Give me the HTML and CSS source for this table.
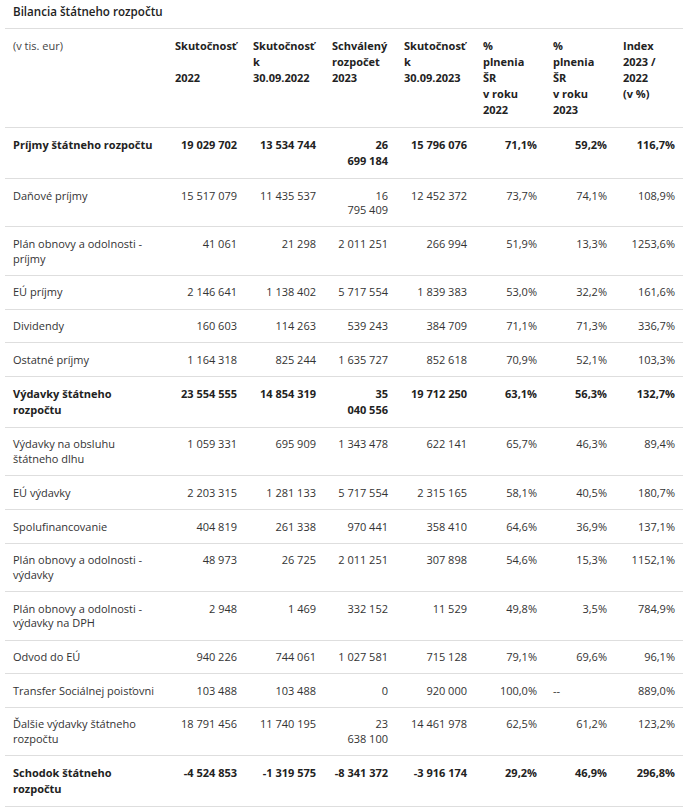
FILE: index.html
```html
<!DOCTYPE html>
<html lang="sk">
<head>
<meta charset="utf-8">
<title>Bilancia štátneho rozpočtu</title>
<link rel="stylesheet" href="styles.css">
</head>
<body>
<div class="wrap">
  <div class="title">Bilancia štátneho rozpočtu</div>
  <table class="budget">
    <colgroup>
      <col class="c0"><col class="c1"><col class="c2"><col class="c3"><col class="c4"><col class="c5"><col class="c6"><col class="c7">
    </colgroup>
    <thead>
      <tr>
        <th class="unit">(v tis. eur)</th>
        <th>Skutočnosť<br><br>2022</th>
        <th>Skutočnosť<br>k<br>30.09.2022</th>
        <th>Schválený<br>rozpočet<br>2023</th>
        <th>Skutočnosť<br>k<br>30.09.2023</th>
        <th>%<br>plnenia<br>ŠR<br>v roku<br>2022</th>
        <th>%<br>plnenia<br>ŠR<br>v roku<br>2023</th>
        <th>Index<br>2023 /<br>2022<br>(v %)</th>
      </tr>
    </thead>
    <tbody>
      <tr class="total"><td>Príjmy štátneho rozpočtu</td><td>19&nbsp;029&nbsp;702</td><td>13&nbsp;534&nbsp;744</td><td class="c3">26 699&nbsp;184</td><td>15&nbsp;796&nbsp;076</td><td>71,1%</td><td>59,2%</td><td>116,7%</td></tr>
      <tr><td>Daňové príjmy</td><td>15&nbsp;517&nbsp;079</td><td>11&nbsp;435&nbsp;537</td><td class="c3">16 795&nbsp;409</td><td>12&nbsp;452&nbsp;372</td><td>73,7%</td><td>74,1%</td><td>108,9%</td></tr>
      <tr><td>Plán obnovy a odolnosti - príjmy</td><td>41&nbsp;061</td><td>21&nbsp;298</td><td class="c3">2&nbsp;011&nbsp;251</td><td>266&nbsp;994</td><td>51,9%</td><td>13,3%</td><td>1253,6%</td></tr>
      <tr><td>EÚ príjmy</td><td>2&nbsp;146&nbsp;641</td><td>1&nbsp;138&nbsp;402</td><td class="c3">5&nbsp;717&nbsp;554</td><td>1&nbsp;839&nbsp;383</td><td>53,0%</td><td>32,2%</td><td>161,6%</td></tr>
      <tr><td>Dividendy</td><td>160&nbsp;603</td><td>114&nbsp;263</td><td class="c3">539&nbsp;243</td><td>384&nbsp;709</td><td>71,1%</td><td>71,3%</td><td>336,7%</td></tr>
      <tr><td>Ostatné príjmy</td><td>1&nbsp;164&nbsp;318</td><td>825&nbsp;244</td><td class="c3">1&nbsp;635&nbsp;727</td><td>852&nbsp;618</td><td>70,9%</td><td>52,1%</td><td>103,3%</td></tr>
      <tr class="total"><td>Výdavky štátneho rozpočtu</td><td>23&nbsp;554&nbsp;555</td><td>14&nbsp;854&nbsp;319</td><td class="c3">35 040&nbsp;556</td><td>19&nbsp;712&nbsp;250</td><td>63,1%</td><td>56,3%</td><td>132,7%</td></tr>
      <tr><td>Výdavky na obsluhu štátneho dlhu</td><td>1&nbsp;059&nbsp;331</td><td>695&nbsp;909</td><td class="c3">1&nbsp;343&nbsp;478</td><td>622&nbsp;141</td><td>65,7%</td><td>46,3%</td><td>89,4%</td></tr>
      <tr><td>EÚ výdavky</td><td>2&nbsp;203&nbsp;315</td><td>1&nbsp;281&nbsp;133</td><td class="c3">5&nbsp;717&nbsp;554</td><td>2&nbsp;315&nbsp;165</td><td>58,1%</td><td>40,5%</td><td>180,7%</td></tr>
      <tr><td>Spolufinancovanie</td><td>404&nbsp;819</td><td>261&nbsp;338</td><td class="c3">970&nbsp;441</td><td>358&nbsp;410</td><td>64,6%</td><td>36,9%</td><td>137,1%</td></tr>
      <tr><td>Plán obnovy a odolnosti - výdavky</td><td>48&nbsp;973</td><td>26&nbsp;725</td><td class="c3">2&nbsp;011&nbsp;251</td><td>307&nbsp;898</td><td>54,6%</td><td>15,3%</td><td>1152,1%</td></tr>
      <tr><td>Plán obnovy a odolnosti - výdavky na DPH</td><td>2&nbsp;948</td><td>1&nbsp;469</td><td class="c3">332&nbsp;152</td><td>11&nbsp;529</td><td>49,8%</td><td>3,5%</td><td>784,9%</td></tr>
      <tr><td>Odvod do EÚ</td><td>940&nbsp;226</td><td>744&nbsp;061</td><td class="c3">1&nbsp;027&nbsp;581</td><td>715&nbsp;128</td><td>79,1%</td><td>69,6%</td><td>96,1%</td></tr>
      <tr><td>Transfer Sociálnej poisťovni</td><td>103&nbsp;488</td><td>103&nbsp;488</td><td class="c3">0</td><td>920&nbsp;000</td><td>100,0%</td><td class="left">--</td><td>889,0%</td></tr>
      <tr><td>Ďalšie výdavky štátneho rozpočtu</td><td>18&nbsp;791&nbsp;456</td><td>11&nbsp;740&nbsp;195</td><td class="c3">23 638&nbsp;100</td><td>14&nbsp;461&nbsp;978</td><td>62,5%</td><td>61,2%</td><td>123,2%</td></tr>
      <tr class="total"><td>Schodok štátneho rozpočtu</td><td>-4&nbsp;524&nbsp;853</td><td>-1&nbsp;319&nbsp;575</td><td class="c3">-8&nbsp;341&nbsp;372</td><td>-3&nbsp;916&nbsp;174</td><td>29,2%</td><td>46,9%</td><td>296,8%</td></tr>
    </tbody>
  </table>
</div>
</body>
</html>
```

FILE: styles.css
```css
body {
  margin: 0;
  background: #fff;
  color: #333;
  font-family: "Open Sans", "Noto Sans", sans-serif;
}

.wrap {
  width: 678px;
  padding: 4px 0 0 5px;
}

.title {
  font-size: 11.6px;
  font-weight: 600;
  line-height: 16px;
  color: #222;
  padding: 0 8px 8px;
  border-bottom: 1px solid #dedede;
}

.budget {
  width: 678px;
  table-layout: fixed;
  border-collapse: collapse;
  font-size: 11px;
}

.c0 { width: 162px; }
.c1 { width: 78px; }
.c2 { width: 79px; }
.c3 { width: 72px; }
.c4 { width: 79px; }
.c5 { width: 70px; }
.c6 { width: 70px; }
.c7 { width: 68px; }

.budget th,
.budget td {
  padding: 9px 8px;
  border-bottom: 1px solid #dedede;
  vertical-align: top;
}

.budget th {
  text-align: left;
  font-weight: 700;
  line-height: 16px;
  color: #222;
}

.budget th.unit {
  font-weight: 400;
  color: #444;
}

.budget td {
  text-align: right;
  line-height: 14.7px;
  padding-top: 9.5px;
  padding-bottom: 8.5px;
}

.budget td:first-child {
  text-align: left;
}

.budget td.c3 {
  padding-left: 9px;
}

.budget td.left {
  text-align: left;
}

.budget tr.total td {
  font-weight: 700;
  line-height: 16px;
  padding-top: 9px;
  padding-bottom: 9px;
  color: #222;
}
```
